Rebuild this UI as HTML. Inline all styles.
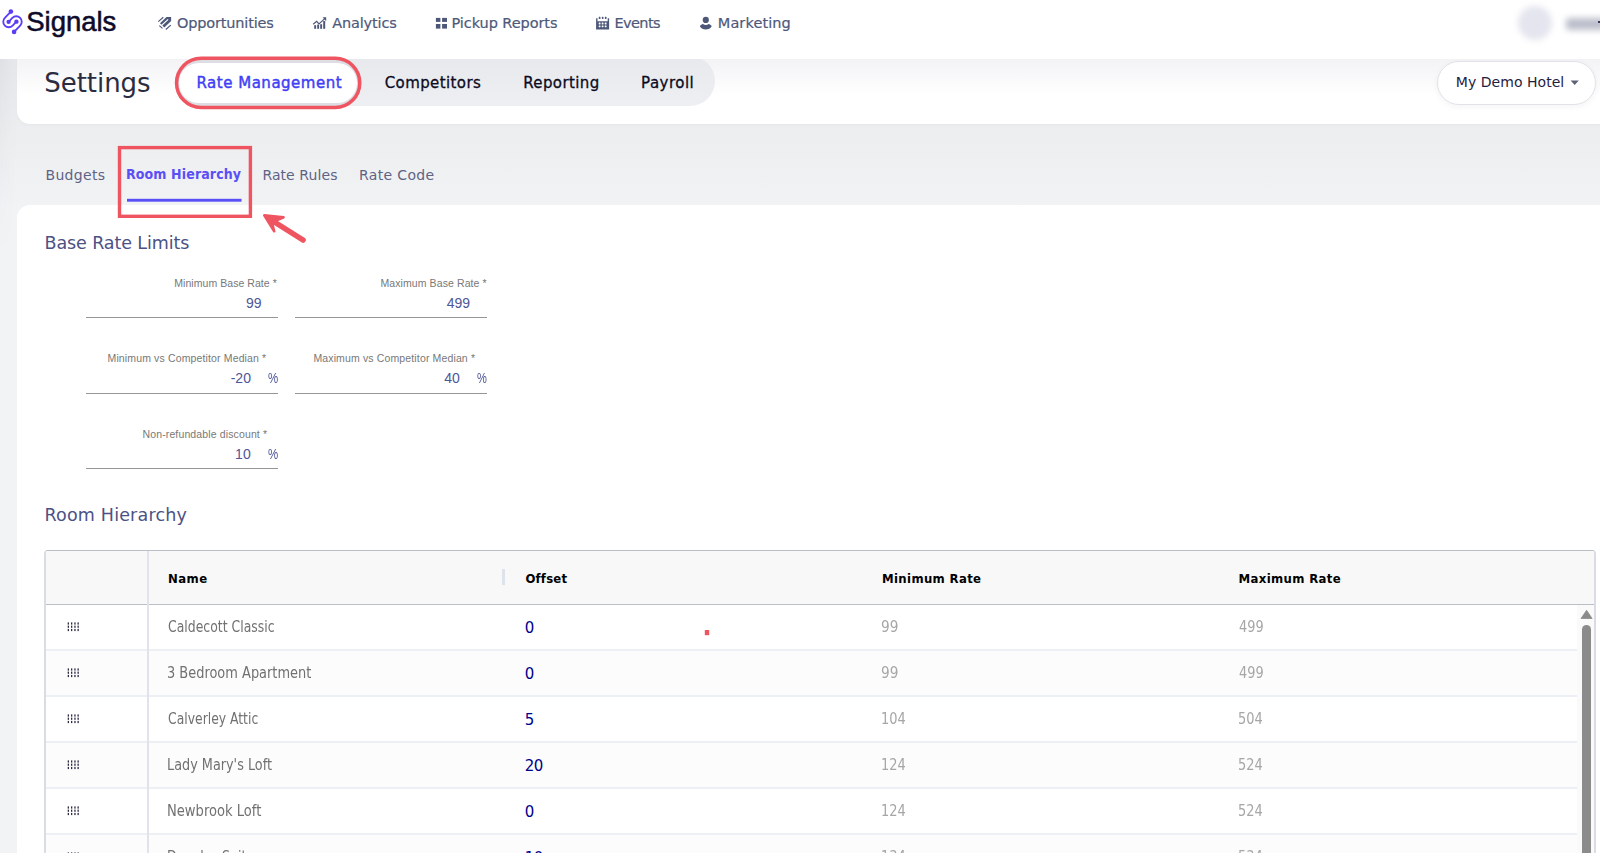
<!DOCTYPE html>
<html lang="en"><head><meta charset="utf-8"><title>Signals - Settings - Room Hierarchy</title>
<style>
html,body{margin:0;padding:0}
body{width:1600px;height:853px;overflow:hidden;position:relative;background:linear-gradient(#e7e8eb 59px,#ecedef 124px,#f2f3f5 212px);font-family:'Liberation Sans',sans-serif}
.abs,.t{position:absolute}
.t{margin:0;white-space:pre;display:block}
h1.t,h2.t{font-weight:400}
header{position:absolute;left:0;top:0;width:1600px;height:59px;background:#fff;z-index:5}
#lgrad{position:absolute;left:0;top:59px;width:17px;height:200px;background:linear-gradient(to right,rgba(40,45,70,.035),rgba(40,45,70,0));-webkit-mask-image:linear-gradient(#000,transparent);mask-image:linear-gradient(#000,transparent)}
#bar{position:absolute;left:17px;top:30px;width:1603px;height:94px;background:#fff;border-radius:0 0 0 13px;box-shadow:0 1px 3px rgba(30,35,60,.03)}
#barshade{position:absolute;left:17px;top:59px;width:1583px;height:36px;background:linear-gradient(#f3f3f6,#fff)}
#tabs{position:absolute;left:176px;top:56px;width:539px;height:50px;border-radius:25px;background:linear-gradient(#e8e9ec,#eeeff2)}
#active{position:absolute;left:177px;top:59px;width:182px;height:48px;border-radius:24px;background:#dcdee4}
#active i{position:absolute;left:2px;right:2px;top:4px;bottom:4px;border-radius:21px;background:#fff;filter:blur(.7px)}
#hotel{position:absolute;left:1437px;top:61px;width:157px;height:42px;border:1px solid #e2e3ea;border-radius:22px;background:#fff;box-shadow:0 2px 6px rgba(30,35,60,.05)}
#card{position:absolute;left:17px;top:205px;width:1603px;height:700px;background:#fff;border-radius:13px 0 0 0}
.ul{position:absolute;height:1px;background:#969696}
#grid{position:absolute;left:44px;top:550px;width:1548px;height:400px;border:1px solid #babfc7;border-left:2px solid #d9dce2;border-right:2px solid #d9dce2;border-radius:4px;background:#fff}
#ghead{position:absolute;left:46px;top:551px;width:1548px;height:53px;background:#f8f8f8;border-bottom:1px solid #babfc7;border-radius:2px 2px 0 0}
.row{position:absolute;left:46px;width:1531px;height:44px;border-bottom:2px solid #eceff3}
#pin{position:absolute;left:147px;top:551px;width:2px;height:320px;background:#e0e3ea}
#sbar{position:absolute;left:1577px;top:605px;width:17px;height:260px;background:#fafafa}
#thumb{position:absolute;left:1582px;top:625px;width:9px;height:260px;border-radius:5px;background:#8b8b8b}
#resz{position:absolute;left:502px;top:569px;width:3px;height:16px;background:#dde2eb}
#avatar{position:absolute;left:1518px;top:6px;width:34px;height:34px;border-radius:50%;background:#e4e5ee;filter:blur(3px)}
#uname{position:absolute;left:1566px;top:18px;width:40px;height:12px;border-radius:3px;background:#bcbecb;filter:blur(3px)}
#anno{position:absolute;left:0;top:0;z-index:9;pointer-events:none}
</style></head>
<body>
<div id="lgrad"></div>
<section aria-label="Settings">
<div id="bar"></div>
<div id="barshade"></div>
<nav aria-label="Settings sections"><div id="tabs"></div><div id="active"><i></i></div>
<span class="t" style="left:196.5px;top:76.0px;font:400 15px/1 'DejaVu Sans','Liberation Sans',sans-serif;color:#3f3ff6;letter-spacing:0.51px;-webkit-text-stroke:0.45px #3f3ff6;">Rate Management</span>
<span class="t" style="left:384.7px;top:76.0px;font:400 15px/1 'DejaVu Sans','Liberation Sans',sans-serif;color:#0b0b1e;letter-spacing:0.40px;-webkit-text-stroke:0.3px #0b0b1e;">Competitors</span>
<span class="t" style="left:523.2px;top:76.0px;font:400 15px/1 'DejaVu Sans','Liberation Sans',sans-serif;color:#0b0b1e;letter-spacing:0.38px;-webkit-text-stroke:0.3px #0b0b1e;">Reporting</span>
<span class="t" style="left:641.1px;top:76.0px;font:400 15px/1 'DejaVu Sans','Liberation Sans',sans-serif;color:#0b0b1e;letter-spacing:0.48px;-webkit-text-stroke:0.3px #0b0b1e;">Payroll</span>
</nav>
<div id="hotel"></div>
<h1 class="t" style="left:44.2px;top:70.0px;font:400 26px/1 'DejaVu Sans','Liberation Sans',sans-serif;color:#2c2c40;letter-spacing:-0.03px;">Settings</h1>
<span class="t" style="left:1455.8px;top:75.0px;font:400 14px/1 'DejaVu Sans','Liberation Sans',sans-serif;color:#1f2142;letter-spacing:0.04px;">My Demo Hotel</span>
<svg class="abs" style="left:1569px;top:79px" width="12" height="8" viewBox="0 0 12 8"><path d="M1.6 1.5H9.8L5.7 6Z" fill="#5f6275"/></svg>
</section>
<nav id="sub" aria-label="Rate management tabs">
<span class="t" style="left:45.5px;top:168.0px;font:400 14px/1 'DejaVu Sans','Liberation Sans',sans-serif;color:#5e6385;letter-spacing:0.32px;">Budgets</span>
<span class="t" style="left:126.0px;top:167.0px;font:700 14px/1 'DejaVu Sans Condensed','Liberation Sans',sans-serif;color:#5a4ff6;letter-spacing:0.12px;">Room Hierarchy</span>
<span class="t" style="left:262.4px;top:168.0px;font:400 14px/1 'DejaVu Sans','Liberation Sans',sans-serif;color:#5e6385;letter-spacing:0.08px;">Rate Rules</span>
<span class="t" style="left:359.0px;top:168.0px;font:400 14px/1 'DejaVu Sans','Liberation Sans',sans-serif;color:#5e6385;letter-spacing:0.35px;">Rate Code</span>
</nav>
<main>
<div id="card"></div>
<form>
<label class="t" style="left:174.2px;top:278.0px;font:400 10.5px/1 'Liberation Sans',sans-serif;color:#787878;letter-spacing:0.06px;">Minimum Base Rate *</label>
<label class="t" style="left:380.4px;top:278.0px;font:400 10.5px/1 'Liberation Sans',sans-serif;color:#787878;letter-spacing:0.10px;">Maximum Base Rate *</label>
<label class="t" style="left:107.5px;top:353.0px;font:400 10.5px/1 'Liberation Sans',sans-serif;color:#787878;letter-spacing:0.14px;">Minimum vs Competitor Median *</label>
<label class="t" style="left:313.4px;top:353.0px;font:400 10.5px/1 'Liberation Sans',sans-serif;color:#787878;letter-spacing:0.14px;">Maximum vs Competitor Median *</label>
<label class="t" style="left:142.5px;top:429.0px;font:400 10.5px/1 'Liberation Sans',sans-serif;color:#787878;letter-spacing:0.13px;">Non-refundable discount *</label>
<span class="t" style="left:245.9px;top:296.0px;font:400 14px/1 'Liberation Sans',sans-serif;color:#4d5699;">99</span>
<span class="t" style="left:446.8px;top:296.0px;font:400 14px/1 'Liberation Sans',sans-serif;color:#4d5699;">499</span>
<span class="t" style="left:230.7px;top:371.0px;font:400 14px/1 'Liberation Sans',sans-serif;color:#4d5699;">-20</span>
<span class="t" style="left:267.7px;top:371.0px;font:400 14px/1 'Liberation Sans',sans-serif;color:#4d5699;transform:scaleX(0.817);transform-origin:0 0;">%</span>
<span class="t" style="left:444.3px;top:371.0px;font:400 14px/1 'Liberation Sans',sans-serif;color:#4d5699;">40</span>
<span class="t" style="left:477.0px;top:371.0px;font:400 14px/1 'Liberation Sans',sans-serif;color:#4d5699;transform:scaleX(0.792);transform-origin:0 0;">%</span>
<span class="t" style="left:235.1px;top:447.0px;font:400 14px/1 'Liberation Sans',sans-serif;color:#4d5699;">10</span>
<span class="t" style="left:267.7px;top:447.0px;font:400 14px/1 'Liberation Sans',sans-serif;color:#4d5699;transform:scaleX(0.817);transform-origin:0 0;">%</span>
<div class="ul" style="left:86px;top:317px;width:192px"></div><div class="ul" style="left:86px;top:393px;width:192px"></div><div class="ul" style="left:295px;top:317px;width:192px"></div><div class="ul" style="left:295px;top:393px;width:192px"></div><div class="ul" style="left:86px;top:468px;width:192px"></div>
</form>
<h2 class="t" style="left:44.5px;top:235.0px;font:400 17.5px/1 'DejaVu Sans','Liberation Sans',sans-serif;color:#4c5184;letter-spacing:-0.10px;">Base Rate Limits</h2>
<h2 class="t" style="left:44.5px;top:507.0px;font:400 17.5px/1 'DejaVu Sans','Liberation Sans',sans-serif;color:#4c5184;letter-spacing:0.18px;">Room Hierarchy</h2>
<div role="grid" aria-label="Room Hierarchy">
<div id="grid"></div><div id="ghead"></div>
<div class="row" style="top:605px;background:#fff"></div><svg class="abs" style="left:67px;top:622px" width="13" height="10" viewBox="0 0 13 10" fill="#2b2b45"><rect x="0.7" y="0.4" width="1.3" height="2.2"/><rect x="0.7" y="3.6" width="1.3" height="2.2"/><rect x="0.7" y="6.9" width="1.3" height="2.2"/><rect x="4.0" y="0.4" width="1.3" height="2.2"/><rect x="4.0" y="3.6" width="1.3" height="2.2"/><rect x="4.0" y="6.9" width="1.3" height="2.2"/><rect x="7.3" y="0.4" width="1.3" height="2.2"/><rect x="7.3" y="3.6" width="1.3" height="2.2"/><rect x="7.3" y="6.9" width="1.3" height="2.2"/><rect x="10.5" y="0.4" width="1.3" height="2.2"/><rect x="10.5" y="3.6" width="1.3" height="2.2"/><rect x="10.5" y="6.9" width="1.3" height="2.2"/></svg><div class="row" style="top:651px;background:#fcfcfc"></div><svg class="abs" style="left:67px;top:668px" width="13" height="10" viewBox="0 0 13 10" fill="#2b2b45"><rect x="0.7" y="0.4" width="1.3" height="2.2"/><rect x="0.7" y="3.6" width="1.3" height="2.2"/><rect x="0.7" y="6.9" width="1.3" height="2.2"/><rect x="4.0" y="0.4" width="1.3" height="2.2"/><rect x="4.0" y="3.6" width="1.3" height="2.2"/><rect x="4.0" y="6.9" width="1.3" height="2.2"/><rect x="7.3" y="0.4" width="1.3" height="2.2"/><rect x="7.3" y="3.6" width="1.3" height="2.2"/><rect x="7.3" y="6.9" width="1.3" height="2.2"/><rect x="10.5" y="0.4" width="1.3" height="2.2"/><rect x="10.5" y="3.6" width="1.3" height="2.2"/><rect x="10.5" y="6.9" width="1.3" height="2.2"/></svg><div class="row" style="top:697px;background:#fff"></div><svg class="abs" style="left:67px;top:714px" width="13" height="10" viewBox="0 0 13 10" fill="#2b2b45"><rect x="0.7" y="0.4" width="1.3" height="2.2"/><rect x="0.7" y="3.6" width="1.3" height="2.2"/><rect x="0.7" y="6.9" width="1.3" height="2.2"/><rect x="4.0" y="0.4" width="1.3" height="2.2"/><rect x="4.0" y="3.6" width="1.3" height="2.2"/><rect x="4.0" y="6.9" width="1.3" height="2.2"/><rect x="7.3" y="0.4" width="1.3" height="2.2"/><rect x="7.3" y="3.6" width="1.3" height="2.2"/><rect x="7.3" y="6.9" width="1.3" height="2.2"/><rect x="10.5" y="0.4" width="1.3" height="2.2"/><rect x="10.5" y="3.6" width="1.3" height="2.2"/><rect x="10.5" y="6.9" width="1.3" height="2.2"/></svg><div class="row" style="top:743px;background:#fcfcfc"></div><svg class="abs" style="left:67px;top:760px" width="13" height="10" viewBox="0 0 13 10" fill="#2b2b45"><rect x="0.7" y="0.4" width="1.3" height="2.2"/><rect x="0.7" y="3.6" width="1.3" height="2.2"/><rect x="0.7" y="6.9" width="1.3" height="2.2"/><rect x="4.0" y="0.4" width="1.3" height="2.2"/><rect x="4.0" y="3.6" width="1.3" height="2.2"/><rect x="4.0" y="6.9" width="1.3" height="2.2"/><rect x="7.3" y="0.4" width="1.3" height="2.2"/><rect x="7.3" y="3.6" width="1.3" height="2.2"/><rect x="7.3" y="6.9" width="1.3" height="2.2"/><rect x="10.5" y="0.4" width="1.3" height="2.2"/><rect x="10.5" y="3.6" width="1.3" height="2.2"/><rect x="10.5" y="6.9" width="1.3" height="2.2"/></svg><div class="row" style="top:789px;background:#fff"></div><svg class="abs" style="left:67px;top:806px" width="13" height="10" viewBox="0 0 13 10" fill="#2b2b45"><rect x="0.7" y="0.4" width="1.3" height="2.2"/><rect x="0.7" y="3.6" width="1.3" height="2.2"/><rect x="0.7" y="6.9" width="1.3" height="2.2"/><rect x="4.0" y="0.4" width="1.3" height="2.2"/><rect x="4.0" y="3.6" width="1.3" height="2.2"/><rect x="4.0" y="6.9" width="1.3" height="2.2"/><rect x="7.3" y="0.4" width="1.3" height="2.2"/><rect x="7.3" y="3.6" width="1.3" height="2.2"/><rect x="7.3" y="6.9" width="1.3" height="2.2"/><rect x="10.5" y="0.4" width="1.3" height="2.2"/><rect x="10.5" y="3.6" width="1.3" height="2.2"/><rect x="10.5" y="6.9" width="1.3" height="2.2"/></svg><div class="row" style="top:835px;background:#fcfcfc"></div><svg class="abs" style="left:67px;top:852px" width="13" height="10" viewBox="0 0 13 10" fill="#2b2b45"><rect x="0.7" y="0.4" width="1.3" height="2.2"/><rect x="0.7" y="3.6" width="1.3" height="2.2"/><rect x="0.7" y="6.9" width="1.3" height="2.2"/><rect x="4.0" y="0.4" width="1.3" height="2.2"/><rect x="4.0" y="3.6" width="1.3" height="2.2"/><rect x="4.0" y="6.9" width="1.3" height="2.2"/><rect x="7.3" y="0.4" width="1.3" height="2.2"/><rect x="7.3" y="3.6" width="1.3" height="2.2"/><rect x="7.3" y="6.9" width="1.3" height="2.2"/><rect x="10.5" y="0.4" width="1.3" height="2.2"/><rect x="10.5" y="3.6" width="1.3" height="2.2"/><rect x="10.5" y="6.9" width="1.3" height="2.2"/></svg>
<div id="pin"></div><div id="resz"></div>
<div id="sbar"></div><div id="thumb"></div>
<svg class="abs" style="left:1580px;top:609px" width="13" height="11" viewBox="0 0 13 11"><path d="M6.6 1.3L12.1 9.5H1Z" fill="#8b8b8b" stroke="#8b8b8b" stroke-width=".8" stroke-linejoin="round"/></svg>
<span class="t" style="left:168.0px;top:572.0px;font:700 13px/1 'DejaVu Sans Condensed','Liberation Sans',sans-serif;color:#000;letter-spacing:0.47px;">Name</span>
<span class="t" style="left:525.4px;top:572.0px;font:700 13px/1 'DejaVu Sans Condensed','Liberation Sans',sans-serif;color:#000;letter-spacing:0.22px;">Offset</span>
<span class="t" style="left:882.0px;top:572.0px;font:700 13px/1 'DejaVu Sans Condensed','Liberation Sans',sans-serif;color:#000;letter-spacing:0.35px;">Minimum Rate</span>
<span class="t" style="left:1238.6px;top:572.0px;font:700 13px/1 'DejaVu Sans Condensed','Liberation Sans',sans-serif;color:#000;letter-spacing:0.35px;">Maximum Rate</span>
<span class="t" style="left:167.9px;top:620.0px;font:400 15.5px/1 'DejaVu Sans Condensed','Liberation Sans',sans-serif;color:#717171;transform:scaleX(0.893);transform-origin:0 0;">Caldecott Classic</span>
<span class="t" style="left:524.7px;top:621.0px;font:400 15px/1 'DejaVu Sans','Liberation Sans',sans-serif;color:#00008b;letter-spacing:-0.60px;">0</span>
<span class="t" style="left:880.7px;top:620.0px;font:400 15.5px/1 'DejaVu Sans Condensed','Liberation Sans',sans-serif;color:#a6a6a6;transform:scaleX(0.981);transform-origin:0 0;">99</span>
<span class="t" style="left:1238.5px;top:620.0px;font:400 15.5px/1 'DejaVu Sans Condensed','Liberation Sans',sans-serif;color:#a6a6a6;transform:scaleX(0.927);transform-origin:0 0;">499</span>
<span class="t" style="left:167.0px;top:666.0px;font:400 15.5px/1 'DejaVu Sans Condensed','Liberation Sans',sans-serif;color:#717171;transform:scaleX(0.929);transform-origin:0 0;">3 Bedroom Apartment</span>
<span class="t" style="left:524.7px;top:667.0px;font:400 15px/1 'DejaVu Sans','Liberation Sans',sans-serif;color:#00008b;letter-spacing:-0.60px;">0</span>
<span class="t" style="left:880.7px;top:666.0px;font:400 15.5px/1 'DejaVu Sans Condensed','Liberation Sans',sans-serif;color:#a6a6a6;transform:scaleX(0.981);transform-origin:0 0;">99</span>
<span class="t" style="left:1238.5px;top:666.0px;font:400 15.5px/1 'DejaVu Sans Condensed','Liberation Sans',sans-serif;color:#a6a6a6;transform:scaleX(0.927);transform-origin:0 0;">499</span>
<span class="t" style="left:167.9px;top:712.0px;font:400 15.5px/1 'DejaVu Sans Condensed','Liberation Sans',sans-serif;color:#717171;transform:scaleX(0.888);transform-origin:0 0;">Calverley Attic</span>
<span class="t" style="left:524.7px;top:713.0px;font:400 15px/1 'DejaVu Sans','Liberation Sans',sans-serif;color:#00008b;letter-spacing:-0.60px;">5</span>
<span class="t" style="left:880.8px;top:712.0px;font:400 15.5px/1 'DejaVu Sans Condensed','Liberation Sans',sans-serif;color:#a6a6a6;transform:scaleX(0.930);transform-origin:0 0;">104</span>
<span class="t" style="left:1237.6px;top:712.0px;font:400 15.5px/1 'DejaVu Sans Condensed','Liberation Sans',sans-serif;color:#a6a6a6;transform:scaleX(0.930);transform-origin:0 0;">504</span>
<span class="t" style="left:167.0px;top:758.0px;font:400 15.5px/1 'DejaVu Sans Condensed','Liberation Sans',sans-serif;color:#717171;transform:scaleX(0.920);transform-origin:0 0;">Lady Mary's Loft</span>
<span class="t" style="left:524.7px;top:759.0px;font:400 15px/1 'DejaVu Sans','Liberation Sans',sans-serif;color:#00008b;letter-spacing:-0.60px;">20</span>
<span class="t" style="left:880.8px;top:758.0px;font:400 15.5px/1 'DejaVu Sans Condensed','Liberation Sans',sans-serif;color:#a6a6a6;transform:scaleX(0.930);transform-origin:0 0;">124</span>
<span class="t" style="left:1237.6px;top:758.0px;font:400 15.5px/1 'DejaVu Sans Condensed','Liberation Sans',sans-serif;color:#a6a6a6;transform:scaleX(0.930);transform-origin:0 0;">524</span>
<span class="t" style="left:167.0px;top:804.0px;font:400 15.5px/1 'DejaVu Sans Condensed','Liberation Sans',sans-serif;color:#717171;transform:scaleX(0.940);transform-origin:0 0;">Newbrook Loft</span>
<span class="t" style="left:524.7px;top:805.0px;font:400 15px/1 'DejaVu Sans','Liberation Sans',sans-serif;color:#00008b;letter-spacing:-0.60px;">0</span>
<span class="t" style="left:880.8px;top:804.0px;font:400 15.5px/1 'DejaVu Sans Condensed','Liberation Sans',sans-serif;color:#a6a6a6;transform:scaleX(0.930);transform-origin:0 0;">124</span>
<span class="t" style="left:1237.6px;top:804.0px;font:400 15.5px/1 'DejaVu Sans Condensed','Liberation Sans',sans-serif;color:#a6a6a6;transform:scaleX(0.930);transform-origin:0 0;">524</span>
<span class="t" style="left:167.0px;top:850.0px;font:400 15.5px/1 'DejaVu Sans Condensed','Liberation Sans',sans-serif;color:#717171;transform:scaleX(0.900);transform-origin:0 0;">Douglas Suite</span>
<span class="t" style="left:524.7px;top:851.0px;font:400 15px/1 'DejaVu Sans','Liberation Sans',sans-serif;color:#00008b;letter-spacing:-0.60px;">10</span>
<span class="t" style="left:880.8px;top:850.0px;font:400 15.5px/1 'DejaVu Sans Condensed','Liberation Sans',sans-serif;color:#a6a6a6;transform:scaleX(0.930);transform-origin:0 0;">134</span>
<span class="t" style="left:1237.6px;top:850.0px;font:400 15.5px/1 'DejaVu Sans Condensed','Liberation Sans',sans-serif;color:#a6a6a6;transform:scaleX(0.930);transform-origin:0 0;">534</span>
</div>
</main>
<header>
<svg class="abs" style="left:0;top:0" width="30" height="45" viewBox="0 0 30 45"><g fill="none" stroke="#5a3ef5" stroke-width="1.85" stroke-linecap="round"><path d="M10.9 11.6L4.86 17.81A5.5 5.5 0 0 0 12.64 25.59L16.4 21.65"/><path d="M10.9 11.6L4.86 17.81A5.5 5.5 0 0 0 12.64 25.59L16.4 21.65" transform="rotate(180 12.5 21.75)"/></g><g fill="#5a3ef5"><circle cx="10.9" cy="11.6" r="2.3"/><circle cx="16.4" cy="21.65" r="2.2"/><circle cx="14.10" cy="31.90" r="2.3"/><circle cx="8.60" cy="21.85" r="2.2"/></g></svg>
<span class="t" style="left:26.3px;top:8.0px;font:400 27.5px/1 'Liberation Sans',sans-serif;color:#0e0b2b;letter-spacing:-0.05px;-webkit-text-stroke:0.55px #0e0b2b;">Signals</span>
<nav aria-label="Main">

<svg class="abs" style="left:156px;top:14px" width="18" height="18" viewBox="0 0 18 18"><path d="M10.5 3H15.1V7L8.3 13.6L4 9.3Z" fill="#4d5879"/><path d="M12.1 5.3L5 12" stroke="#fff" stroke-width="1.15" fill="none"/><g stroke="#4d5879" stroke-width="1.15" fill="none"><path d="M7.3 3.3L2.3 7.6M3.3 11.6L6.5 14.4M14.8 11.1L9.8 15.5"/></g></svg>
<svg class="abs" style="left:312px;top:15px" width="16" height="16" viewBox="0 0 16 16"><g fill="#4d5879"><rect x="2.2" y="10.2" width="1.9" height="3.6"/><rect x="5.2" y="9.6" width="1.9" height="4.2"/><rect x="8.2" y="9.2" width="1.9" height="4.6"/><rect x="11.2" y="6" width="2" height="7.8"/><path d="M10.6 2.3H14.2V6.2Z"/></g><path d="M1.2 9.2L4.6 6.3L7 8.9L13 3.4" fill="none" stroke="#4d5879" stroke-width="1.2"/></svg>
<svg class="abs" style="left:435px;top:17px" width="13" height="13" viewBox="0 0 13 13"><g fill="#4d5879"><rect x="0.9" y="0.9" width="4.5" height="4"/><rect x="7.1" y="0.9" width="4.9" height="4"/><rect x="0.9" y="7" width="4.5" height="4.6"/><rect x="7.1" y="7" width="4.9" height="4.6"/></g></svg>
<svg class="abs" style="left:595px;top:16px" width="15" height="15" viewBox="0 0 15 15"><g fill="#4d5879"><rect x="3.7" y="0.8" width="1.8" height="2.1" rx=".6"/><rect x="6.8" y="0.8" width="1.7" height="2.1" rx=".6"/><rect x="9.8" y="0.8" width="1.8" height="2.1" rx=".6"/><path d="M1.1 2.2H2.5V5.2H12.7V2.2H14.1V13.5H1.1Z"/></g><g fill="#fff"><rect x="3.7" y="6.6" width="1.8" height="1.8" rx=".4"/><rect x="6.7" y="6.6" width="1.8" height="1.8" rx=".4"/><rect x="9.7" y="6.6" width="1.9" height="1.8" rx=".4"/><rect x="3.7" y="9.4" width="1.8" height="1.8" rx=".4"/><rect x="6.7" y="9.4" width="1.8" height="1.8" rx=".4"/><rect x="9.7" y="9.4" width="1.9" height="1.8" rx=".4"/></g></svg>
<svg class="abs" style="left:698px;top:16px" width="16" height="15" viewBox="0 0 16 15"><g fill="#4d5879"><circle cx="7.8" cy="3.9" r="3.1"/><path d="M1.9 10.3C2.6 8.9 3.9 8.1 5 8C6.6 9.2 9 9.2 10.6 8C11.7 8.1 13 8.9 13.7 10.3C12.5 12.4 10.4 13.5 7.8 13.5C5.2 13.5 3.1 12.4 1.9 10.3Z"/></g></svg>

<span class="t" style="left:177.0px;top:16.0px;font:400 14.5px/1 'DejaVu Sans','Liberation Sans',sans-serif;color:#4e597a;letter-spacing:-0.17px;-webkit-text-stroke:0.2px #4e597a;">Opportunities</span>
<span class="t" style="left:332.2px;top:16.0px;font:400 14.5px/1 'DejaVu Sans','Liberation Sans',sans-serif;color:#4e597a;letter-spacing:-0.15px;-webkit-text-stroke:0.2px #4e597a;">Analytics</span>
<span class="t" style="left:451.5px;top:16.0px;font:400 14.5px/1 'DejaVu Sans','Liberation Sans',sans-serif;color:#4e597a;letter-spacing:-0.08px;-webkit-text-stroke:0.2px #4e597a;">Pickup Reports</span>
<span class="t" style="left:614.5px;top:16.0px;font:400 14.5px/1 'DejaVu Sans','Liberation Sans',sans-serif;color:#4e597a;letter-spacing:-0.60px;-webkit-text-stroke:0.2px #4e597a;">Events</span>
<span class="t" style="left:717.8px;top:16.0px;font:400 14.5px/1 'DejaVu Sans','Liberation Sans',sans-serif;color:#4e597a;letter-spacing:0.09px;-webkit-text-stroke:0.2px #4e597a;">Marketing</span>
</nav>
<div id="avatar"></div><div id="uname"></div>
<div class="abs" style="left:1598px;top:21px;width:2px;height:2px;background:#333a55"></div>
</header>
<svg id="anno" width="1600" height="853" viewBox="0 0 1600 853">
<rect x="176.55" y="58.35" width="183.2" height="49.2" rx="24.6" fill="none" stroke="#ee5561" stroke-width="3.5"/>
<rect x="119.5" y="147.6" width="130.9" height="68.7" fill="none" stroke="#ee5561" stroke-width="3.4"/>
<path d="M303 240L272 220.5" stroke="#ee5561" stroke-width="5.6" stroke-linecap="round" fill="none"/>
<path d="M264.3 215.4L283.6 217.2L275.5 220.8L272.6 225L274.2 231.2Z" fill="#ee5561" stroke="#ee5561" stroke-width="2.6" stroke-linejoin="round"/>
<rect x="704.8" y="630" width="4.4" height="5.2" fill="#ee5561"/>
<rect x="127" y="198.8" width="114.5" height="2.9" fill="#5a4ff6"/>
</svg>
</body></html>
